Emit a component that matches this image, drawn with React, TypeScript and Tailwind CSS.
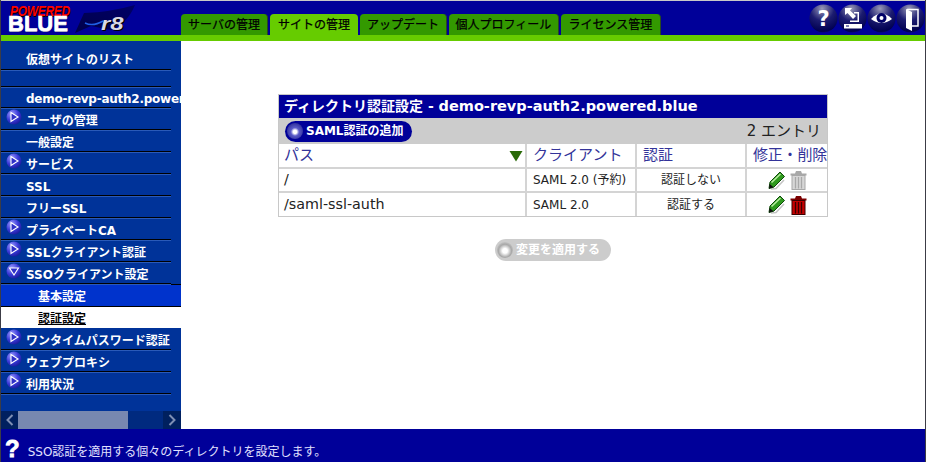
const jp = "font-['DejaVu_Sans','Noto_Sans_CJK_JP',sans-serif]";

const tabs = [
  { label: "サーバの管理", width: "w-[87px]" },
  { label: "サイトの管理", width: "w-[88px]", active: true },
  { label: "アップデート", width: "w-[87px]" },
  { label: "個人プロフィール", width: "w-[110px]" },
  { label: "ライセンス管理", width: "w-[100px]" },
];

const menu = [
  { label: "仮想サイトのリスト", h: "h-[29px]", pad: "pt-[10px]" },
  { label: "", h: "h-[17px]" },
  { label: "demo-revp-auth2.powered.blue", h: "h-[21px]", pad: "pt-[4px] tracking-[-0.25px]" },
  { label: "ユーザの管理", arrow: "right", h: "h-[22px]" },
  { label: "一般設定", h: "h-[22px]" },
  { label: "サービス", arrow: "right", h: "h-[22px]" },
  { label: "SSL", h: "h-[22px]" },
  { label: "フリーSSL", h: "h-[22px]" },
  { label: "プライベートCA", arrow: "right", h: "h-[22px]" },
  { label: "SSLクライアント認証", arrow: "right", h: "h-[22px]" },
  { label: "SSOクライアント設定", arrow: "down", h: "h-[22px]" },
];

const menuAfter = [
  { label: "ワンタイムパスワード認証", arrow: "right" },
  { label: "ウェブプロキシ", arrow: "right" },
  { label: "利用状況", arrow: "right" },
];

function ArrowBall({ dir }: { dir: string }) {
  return (
    <svg width="16" height="16" viewBox="0 0 16 16" className="absolute left-[5px] top-[1px]">
      <defs>
        <radialGradient id="ball" cx="0.35" cy="0.3" r="0.85">
          <stop offset="0" stopColor="#a0a0ff" />
          <stop offset="0.5" stopColor="#3a3ad8" />
          <stop offset="1" stopColor="#10108a" />
        </radialGradient>
      </defs>
      <circle cx="8" cy="8" r="7.5" fill="url(#ball)" />
      {dir === "right" ? (
        <path d="M5 3.5 L12 8 L5 12.5 Z" fill="#3030c8" stroke="#fff" strokeWidth="1.1" />
      ) : (
        <path d="M3.5 5 L12.5 5 L8 12 Z" fill="#3030c8" stroke="#fff" strokeWidth="1.1" />
      )}
    </svg>
  );
}

function MenuRow({ label, arrow, h, pad }: { label: string; arrow?: string; h: string; pad?: string }) {
  return (
    <div className={`relative ${h} w-[170px] shrink-0 flex items-center border-b border-black shadow-[0_1px_0_#2a5ab8]`}>
      {arrow && <ArrowBall dir={arrow} />}
      <span className={`pl-[25px] text-[12px] font-bold text-white whitespace-nowrap ${pad ?? "pt-[4px]"}`}>{label}</span>
    </div>
  );
}

function RoundIcon({ children }: { children: React.ReactNode }) {
  return (
    <svg width="29" height="29" viewBox="0 0 29 29">
      <defs>
        <radialGradient id="hdr" cx="0.45" cy="0.15" r="0.95">
          <stop offset="0" stopColor="#9a9ab8" />
          <stop offset="0.45" stopColor="#1c1c70" />
          <stop offset="0.85" stopColor="#000050" />
          <stop offset="1" stopColor="#1a1aa0" />
        </radialGradient>
      </defs>
      <circle cx="14.5" cy="14.5" r="14" fill="url(#hdr)" />
      {children}
    </svg>
  );
}

function Pencil() {
  return (
    <svg width="17" height="19" viewBox="0 0 17 19">
      <path d="M3 18 L8 17.5 L16 9" fill="none" stroke="#c4c4c4" strokeWidth="1.5" />
      <path d="M12 1 L16.5 5.5 L6 16 L1 17.5 L2 11 Z" fill="#2f9a1e" stroke="#0d4a08" strokeWidth="1" />
      <path d="M3.5 11.5 L12.5 3" stroke="#b8eca0" strokeWidth="1.6" />
      <path d="M1 17.5 L1.7 13 L5.5 16.2 Z" fill="#111" />
    </svg>
  );
}

function Trash({ active }: { active?: boolean }) {
  const body = active ? "#c40000" : "#d6d6d6";
  const edge = active ? "#3a0000" : "#a8a8a8";
  return (
    <svg width="17" height="20" viewBox="0 0 17 20">
      <path d="M0.5 3.5 H16.5 V5.5 H0.5 Z M5 3.5 L6 1 H11 L12 3.5 Z" fill={active ? "#7a0000" : edge} />
      <rect x="2" y="5.5" width="13" height="14" fill={body} stroke={edge} />
      <path d="M5.5 7 V18.5 M8.5 7 V18.5 M11.5 7 V18.5" stroke={edge} strokeWidth="1.3" />
    </svg>
  );
}

function PillBall() {
  return (
    <span className="w-[16px] h-[16px] rounded-full shrink-0 bg-[radial-gradient(circle_at_50%_55%,#ffffff_0,#ffffff_15%,#5a5ac8_35%,#14147c_100%)]" />
  );
}

export default function App() {
  return (
    <div className={`${jp} w-[926px] h-[462px] flex flex-col overflow-hidden bg-white border-l border-r border-[#3c3c46]`}>
      {/* Header */}
      <div className="h-[1px] bg-[#c8c8c8] shrink-0" />
      <div className="h-[34px] bg-[#000099] shrink-0 flex">
        <div className="relative w-[180px] shrink-0 overflow-hidden">
          <svg width="70" height="32" viewBox="0 0 70 32" className="absolute left-[72px] top-[1px]">
            <defs>
              <linearGradient id="swoosh" x1="0" y1="1" x2="1" y2="0">
                <stop offset="0" stopColor="#00004a" />
                <stop offset="1" stopColor="#000066" />
              </linearGradient>
            </defs>
            <path d="M2 31 L11 11 Q38 10 62 3 Q54 22 38 28 L18 24 Z" fill="url(#swoosh)" />
            <path d="M12 21 Q20 25 30 19" fill="none" stroke="#2060e8" strokeWidth="1.5" />
          </svg>
          <span className="absolute left-[9px] top-[4px] scale-y-125 text-[12px] leading-none font-bold italic tracking-[-0.3px] text-[#ff0000] [text-shadow:1px_1px_0_#000] font-['Liberation_Sans',sans-serif]">
            POWERED
          </span>
          <span className="absolute left-[7px] top-[12px] text-[22px] leading-none font-bold text-white [-webkit-text-stroke:0.6px_white] [text-shadow:0_1px_0_#8888aa] font-['Liberation_Sans',sans-serif]">
            BLUE
          </span>
          <span className="absolute left-[100px] top-[13px] origin-left scale-x-125 text-[19px] leading-none font-bold italic text-[#d8d8e4] [text-shadow:1px_1px_0_#000] font-['Liberation_Sans',sans-serif]">
            r8
          </span>
        </div>
        <div className="flex-1 flex items-end gap-[2px]">
          {tabs.map((t) => (
            <div
              key={t.label}
              className={`${t.width} h-[21px] rounded-t-[4px] flex items-center justify-center text-[12px] text-black [-webkit-text-stroke:0.25px_black] ${
                t.active ? "bg-[#66cc00]" : "bg-[#339900] border-r border-[#2a4a20]"
              }`}
            >
              {t.label}
            </div>
          ))}
        </div>
        <div className="flex items-center">
          <RoundIcon>
            <text x="14.5" y="22" textAnchor="middle" fontSize="21" fontWeight="900" fill="#fff" fontFamily="DejaVu Sans">?</text>
          </RoundIcon>
          <RoundIcon>
            <path d="M7 4 L14 4 L12 6.5 L18 12 L15 15 L9.5 9 L7 11 Z" fill="#fff" />
            <path d="M16 8 H21 V18 H12 V16.5 H19.5 V9.5 H16 Z" fill="#fff" />
            <path d="M6 20 H24 V24.5 H6 Z" fill="#fff" />
            <path d="M8 22 H11" stroke="#000066" />
          </RoundIcon>
          <RoundIcon>
            <path d="M4 15 Q14.5 4 25 15 Q14.5 23 4 15 Z" fill="#fff" />
            <circle cx="14.5" cy="14" r="5" fill="#000066" />
            <circle cx="14.5" cy="14" r="2" fill="#fff" />
          </RoundIcon>
          <RoundIcon>
            <path d="M11 5.5 H22 V22 H11" fill="none" stroke="#fff" strokeWidth="1.5" />
            <path d="M10 5 L16 8 V27 L10 24 Z" fill="#fff" />
          </RoundIcon>
        </div>
      </div>
      <div className="h-[6px] bg-[#66cc00] shrink-0" />

      {/* Body */}
      <div className="flex-1 flex min-h-0">
        <div className="w-[180px] shrink-0 bg-[#003399] flex flex-col overflow-hidden">
          <div className="flex-1 min-h-0 flex flex-col overflow-hidden">
            {menu.map((m) => (
              <MenuRow key={m.label + m.h} label={m.label} arrow={m.arrow} h={m.h} pad={m.pad} />
            ))}
            <div className="h-[23px] shrink-0 bg-[#0033cc] flex items-center border-y border-black">
              <span className="pl-[37px] pt-[2px] text-[12px] font-bold text-white">基本設定</span>
            </div>
            <div className="h-[21px] shrink-0 bg-white flex items-center">
              <span className="pl-[37px] pt-[2px] text-[12px] font-bold text-black underline">認証設定</span>
            </div>
            {menuAfter.map((m) => (
              <MenuRow key={m.label} label={m.label} arrow={m.arrow} h="h-[22px]" />
            ))}
          </div>
          {/* Scrollbar */}
          <div className="h-[18px] shrink-0 flex items-stretch bg-[#002a7f]">
            <div className="w-[17px] bg-[#00205f] flex items-center justify-center text-[#7e8fb4]">
              <svg width="8" height="12" viewBox="0 0 8 12"><path d="M6.5 1 L1.5 6 L6.5 11" fill="none" stroke="currentColor" strokeWidth="2" /></svg>
            </div>
            <div className="w-[110px] bg-[#7888b0]" />
            <div className="flex-1" />
            <div className="w-[18px] bg-[#00205f] flex items-center justify-center text-[#7e8fb4]">
              <svg width="8" height="12" viewBox="0 0 8 12"><path d="M1.5 1 L6.5 6 L1.5 11" fill="none" stroke="currentColor" strokeWidth="2" /></svg>
            </div>
          </div>
        </div>

        {/* Content */}
        <div className="flex-1 flex flex-col items-start pl-[97px] pt-[53px]">
          <div className="w-[550px] border border-[#c8c8c8]">
            <div className="h-[23px] bg-[#000099] flex items-center pl-[5px] text-[14px] font-bold text-white whitespace-pre">
              ディレクトリ認証設定 - <span className="text-[14.5px]">demo-revp-auth2.powered.blue</span>
            </div>
            <div className="h-[26px] bg-[#cccccc] flex items-center justify-between pl-[6px] pr-[6px]">
              <div className="h-[21px] w-[127px] rounded-full bg-[#000099] flex items-center pl-[2px] gap-[3px] text-[12px] font-bold text-white">
                <PillBall />
                SAML認証の追加
              </div>
              <span className="text-[15px] text-[#222]">2 エントリ</span>
            </div>
            <div className="grid grid-cols-[248px_110px_110px_1fr] text-[12px] text-[#222]">
              <div className="h-[25px] border-r-2 border-b-2 border-[#d4d4d4] flex items-center justify-between pl-[5px] pr-[2px] text-[15px] text-[#333399]">
                パス
                <svg width="14" height="12" viewBox="0 0 14 12"><path d="M0.5 1 H13.5 L7 11.5 Z" fill="#2a6a08" /></svg>
              </div>
              <div className="h-[25px] border-r-2 border-b-2 border-[#d4d4d4] flex items-center pl-[6px] text-[15px] text-[#333399]">クライアント</div>
              <div className="h-[25px] border-r-2 border-b-2 border-[#d4d4d4] flex items-center pl-[6px] text-[15px] text-[#333399]">認証</div>
              <div className="h-[25px] border-b-2 border-[#d4d4d4] flex items-center pl-[6px] text-[15px] tracking-[-0.2px] text-[#333399] whitespace-nowrap">修正・削除</div>

              <div className="h-[24px] border-r-2 border-b-2 border-[#d4d4d4] flex items-center pl-[5px] text-[14.3px]">/</div>
              <div className="h-[24px] border-r-2 border-b-2 border-[#d4d4d4] flex items-center pl-[6px]">SAML 2.0 (予約)</div>
              <div className="h-[24px] border-r-2 border-b-2 border-[#d4d4d4] flex items-center justify-center">認証しない</div>
              <div className="h-[24px] border-b-2 border-[#d4d4d4] flex items-center justify-center gap-[5px]"><Pencil /><Trash /></div>

              <div className="h-[23px] border-r-2 border-[#d4d4d4] flex items-center pl-[5px] text-[14.3px]">/saml-ssl-auth</div>
              <div className="h-[23px] border-r-2 border-[#d4d4d4] flex items-center pl-[6px]">SAML 2.0</div>
              <div className="h-[23px] border-r-2 border-[#d4d4d4] flex items-center justify-center">認証する</div>
              <div className="h-[23px] flex items-center justify-center gap-[5px]"><Pencil /><Trash active /></div>
            </div>
          </div>
          <div className="mt-[22px] ml-[217px] h-[22px] w-[116px] rounded-full bg-[#cccccc] flex items-center pl-[2px] gap-[3px] text-[12px] font-bold text-white">
            <span className="w-[16px] h-[16px] rounded-full shrink-0 bg-[radial-gradient(circle_at_50%_55%,#ffffff_0,#ffffff_20%,#a8a8a8_55%,#e8e8e8_100%)]" />
            変更を適用する
          </div>
        </div>
      </div>

      {/* Footer */}
      <div className="h-[33px] bg-[#000099] shrink-0 flex items-center pl-[4px] gap-[8px] text-[12px] text-[#e0e0ff]">
        <span className="text-[24px] font-black leading-none text-white pt-[7px] [-webkit-text-stroke:0.8px_white] font-['Liberation_Sans',sans-serif]">?</span>
        <span className="pt-[12px]">SSO認証を適用する個々のディレクトリを設定します。</span>
      </div>
    </div>
  );
}
